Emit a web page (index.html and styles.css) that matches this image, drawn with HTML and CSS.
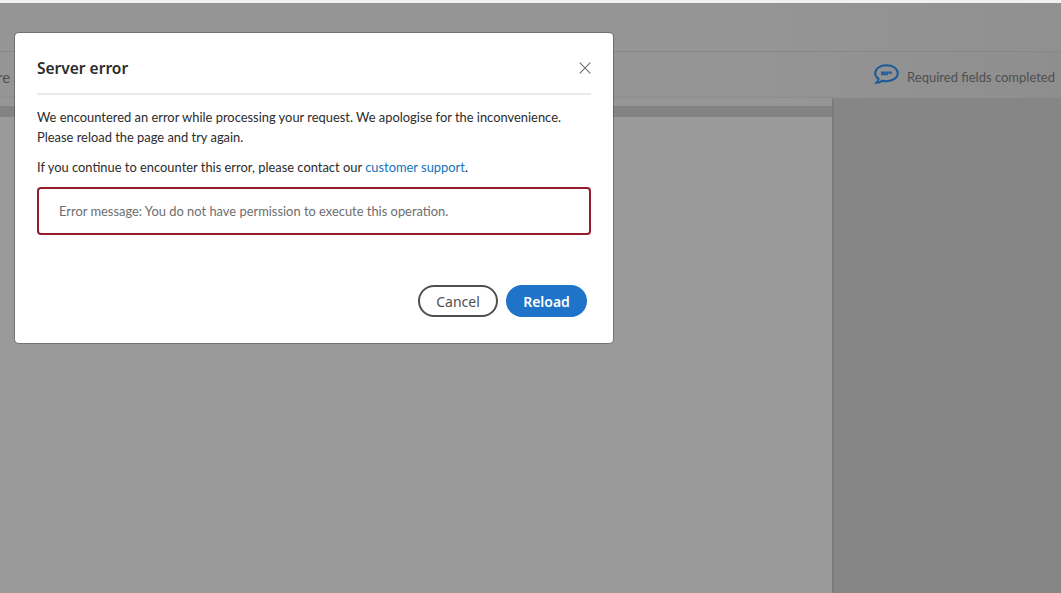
FILE: index.html
```html
<!DOCTYPE html>
<html lang="en">
<head>
    <meta charset="UTF-8">
    <title>Server error</title>
    <link rel="stylesheet" href="styles.css">
</head>
<body>
    <div class="app">
        <div class="top-strip"></div>
        <div class="header"></div>
        <div class="toolbar">
            <span class="toolbar-cut">re</span>
            <div class="status">
                <svg class="status-icon" width="25" height="22" viewBox="0 0 25 22">
                    <path d="M12.500 1.200C6.200 1.200 1.200 4.700 1.200 9.200c0 2.400 1.300 4.300 3.400 5.700-.2 1.400-1 2.700-2.200 3.900 2.400 0 4.400-.8 5.800-2.100 1.300.3 2.800.5 4.300.5 6.300 0 11.300-3.500 11.300-8s-5-8-11.300-8z" fill="none" stroke="#1c5a96" stroke-width="2"/>
                    <path d="M7 7.500h11v2.200H7zM7 9.700h7v1.600H7z" fill="#2a6299"/>
                </svg>
                <span>Required fields completed</span>
            </div>
        </div>
        <div class="workspace">
            <div class="doc-column">
                <div class="doc-prev"></div>
                <div class="doc-gap"></div>
                <div class="doc-page"></div>
            </div>
            <div class="side-panel"></div>
        </div>
    </div>

    <div class="modal">
        <div class="modal-head">
            <h2>Server error</h2>
            <svg class="close-icon" width="12" height="12" viewBox="0 0 12 12">
                <path d="M.7.7l10.600 10.600M11.300.7L.7 11.300" stroke="#6e6e6e" stroke-width="1.100" fill="none"/>
            </svg>
        </div>
        <div class="modal-body">
            <p>We encountered an error while processing your request. We apologise for the inconvenience.<br>Please reload the page and try again.</p>
            <p class="second">If you continue to encounter this error, please contact our <a href="#">customer support</a>.</p>
            <div class="error-box">Error message: You do not have permission to execute this operation.</div>
        </div>
        <div class="modal-actions">
            <button class="btn btn-cancel">Cancel</button>
            <button class="btn btn-reload">Reload</button>
        </div>
    </div>
</body>
</html>
```

FILE: styles.css
```css
html, body { margin: 0; height: 100%; overflow: hidden; }
body { font-family: Lato, "Noto Sans", sans-serif; background-color: #959595; color: #2c2c2c; }
.app { height: 593px; display: flex; flex-direction: column; }
.top-strip { height: 3px; background-color: #f0f0f0; }
.header { height: 48px; background: linear-gradient(to right, #959595 70%, #909090); border-bottom: 1px solid #878787; }
.toolbar { height: 46px; background: linear-gradient(to right, #959595 70%, #8e8e8e); display: flex; justify-content: space-between; align-items: center; color: #4f4f4f; font-size: 13px; }
.status { display: flex; align-items: center; gap: 8px; margin-right: 6px; padding-top: 4px; }
.status-icon { margin-top: -4px; }
.toolbar-cut { padding-top: 4px; margin-left: -3px; font-size: 15px; }
.workspace { flex: 1; display: flex; background-color: #868686; }
.doc-column { width: 832px; display: flex; flex-direction: column; box-shadow: 1px 0 2px rgba(0,0,0,0.15); }
.doc-prev { height: 8px; background-color: #969696; }
.doc-gap { height: 11px; background-color: #838383; }
.doc-page { flex: 1; background-color: #9a9a9a; }
.side-panel { flex: 1; }

.modal { position: absolute; left: 15px; top: 33px; width: 598px; height: 310px; box-sizing: border-box; background-color: white; border-radius: 4px; padding: 0 22px; box-shadow: 0 0 0 1px rgba(0,0,0,0.25); display: flex; flex-direction: column; }
.modal-head { height: 50px; padding-top: 10px; margin-bottom: 12px; display: flex; justify-content: space-between; align-items: center; border-bottom: 2px solid #eaeaea; }
.modal-head h2 { margin: 0; font-family: "Noto Sans", sans-serif; font-size: 15.500px; font-weight: 600; color: #2c2c2c; }
.modal-body { flex: 1; font-size: 12.900px; line-height: 20px; }
.modal-body p { margin: 0; }
.modal-body .second { margin-top: 10px; }
.modal-body a { color: #1473b9; text-decoration: none; }
.error-box { margin-top: 10px; height: 48px; box-sizing: border-box; border: 2px solid #961c2c; border-radius: 4px; padding: 0 20px; display: flex; align-items: center; color: #6e6e6e; }
.modal-actions { display: flex; justify-content: flex-end; gap: 8px; padding: 0 4px 26px 0; }
.btn { height: 32px; border-radius: 16px; font-family: "Noto Sans", sans-serif; font-size: 14px; padding: 0; }
.btn-cancel { width: 80px; background-color: white; border: 2px solid #505050; color: #505050; }
.btn-reload { width: 81px; background-color: #1f73c8; border: none; color: white; font-weight: 600; }
```
